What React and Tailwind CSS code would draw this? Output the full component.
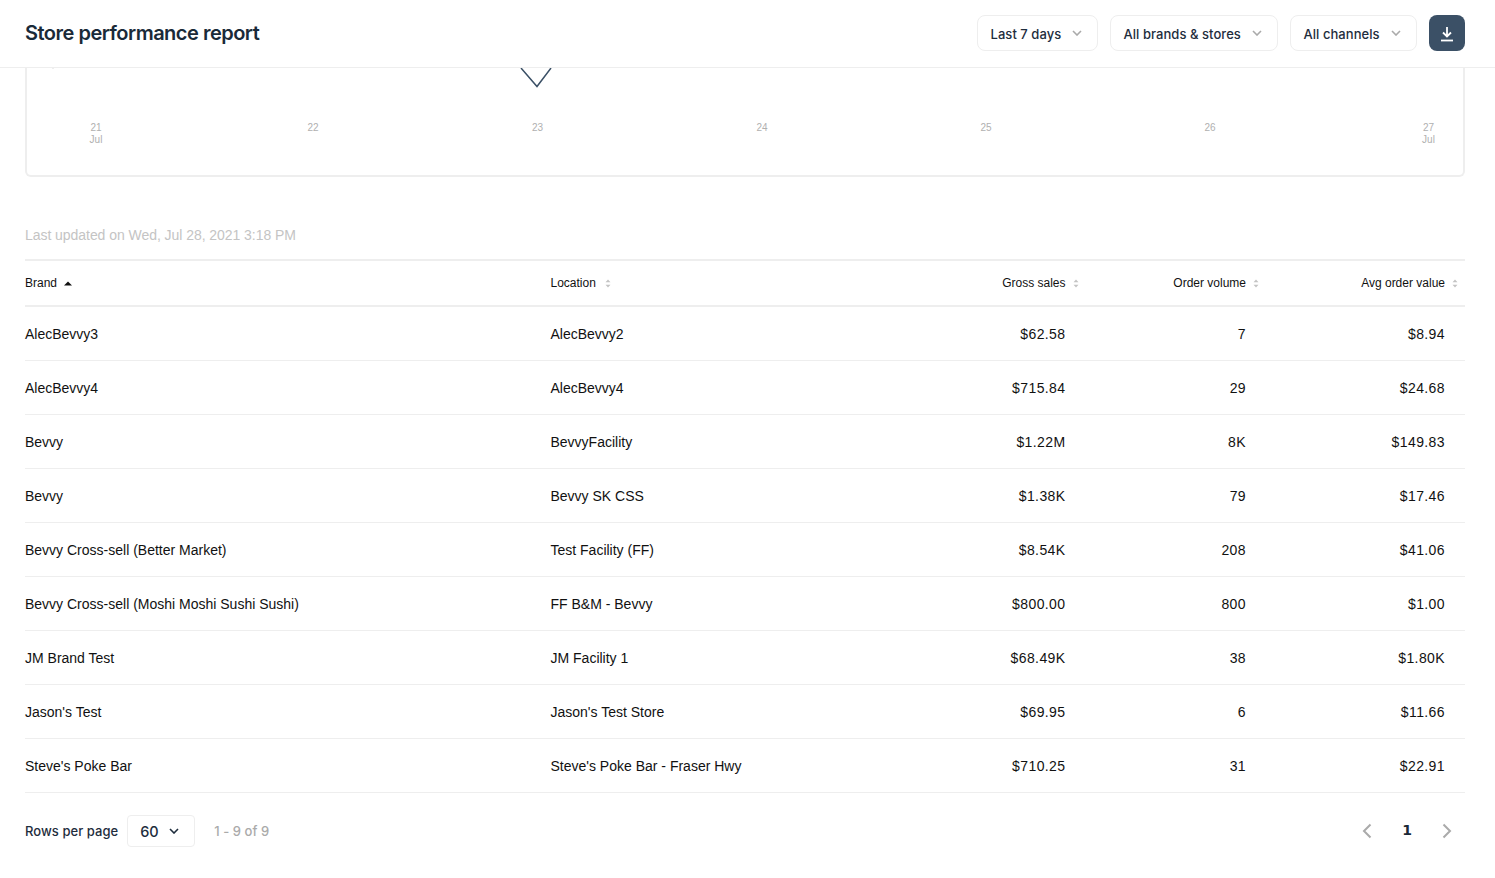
import React from "react";

const rows = [
  ["AlecBevvy3", "AlecBevvy2", "$62.58", "7", "$8.94"],
  ["AlecBevvy4", "AlecBevvy4", "$715.84", "29", "$24.68"],
  ["Bevvy", "BevvyFacility", "$1.22M", "8K", "$149.83"],
  ["Bevvy", "Bevvy SK CSS", "$1.38K", "79", "$17.46"],
  ["Bevvy Cross-sell (Better Market)", "Test Facility (FF)", "$8.54K", "208", "$41.06"],
  ["Bevvy Cross-sell (Moshi Moshi Sushi Sushi)", "FF B&M - Bevvy", "$800.00", "800", "$1.00"],
  ["JM Brand Test", "JM Facility 1", "$68.49K", "38", "$1.80K"],
  ["Jason's Test", "Jason's Test Store", "$69.95", "6", "$11.66"],
  ["Steve's Poke Bar", "Steve's Poke Bar - Fraser Hwy", "$710.25", "31", "$22.91"],
];

const Chevron = ({ className = "" }) => (
  <svg width="10" height="6" viewBox="0 0 10 6" fill="none" className={className}>
    <path d="M1 1l4 4 4-4" stroke="currentColor" strokeWidth="1.6" />
  </svg>
);

const Filter = ({ label, width }) => (
  <button className={`h-9 ${width} flex items-center justify-between pl-[12.5px] pr-[15px] bg-white border border-[#eeeeee] rounded-lg text-[13px] font-medium tracking-[0.05px] text-[#1e2d3d]`}>
    <span className="pt-[5px]">{label}</span>
    <Chevron className="text-[#aaaaaa]" />
  </button>
);

const SortIcon = () => (
  <svg width="6" height="9" viewBox="0 0 6 9" className="ml-[7px]">
    <path d="M3 0.5L5.5 3.2H0.5zM3 8.5L0.5 5.8h5z" fill="#c4c4c4" />
  </svg>
);

const labels = [
  [96, "21", "Jul"],
  [313, "22"],
  [537.5, "23"],
  [762, "24"],
  [986, "25"],
  [1210, "26"],
  [1428.5, "27", "Jul"],
];

export default function App() {
  return (
    <div className="h-[878px] overflow-hidden bg-white font-['Inter','Liberation_Sans',sans-serif] text-[#111111]">
      <header className="h-[68px] pb-[2px] flex items-center justify-between pl-[25px] pr-[30px] border-b border-[#eeeeee]">
        <h1 className="text-[20px] font-semibold tracking-[-0.5px] text-[#1a2a38]">Store performance report</h1>
        <div className="flex items-center gap-3">
          <Filter label="Last 7 days" width="w-[121px]" />
          <Filter label="All brands & stores" width="w-[168px]" />
          <Filter label="All channels" width="w-[127px]" />
          <button className="w-9 h-9 pt-[2px] rounded-lg bg-[#3b5066] flex items-center justify-center">
            <svg width="14" height="16" viewBox="0 0 14 16" fill="none" stroke="white" strokeWidth="1.8">
              <path d="M7 1v9M3 6.5L7 10.5 11 6.5" />
              <path d="M1 14.5h12" />
            </svg>
          </button>
        </div>
      </header>

      <main className="pl-[25px] pr-[30px] font-['Liberation_Sans',sans-serif]">
        <section className="h-[109px] border-2 border-t-0 border-[#eeeeee] rounded-b-md overflow-hidden">
          <svg width="1436" height="107" viewBox="27 68 1436 107" className="block">
            <path d="M521 68L537 86.5 551 68" fill="none" stroke="#3b5066" strokeWidth="1.5" />
            <path d="M53 68v1" stroke="#dddddd" />
            {labels.map(([x, a, b]) => (
              <text key={a} x={x} textAnchor="middle" fontSize="10" fill="#b0b0b0" fontFamily="'Liberation Sans', sans-serif">
                <tspan x={x} y="131">{a}</tspan>
                {b && <tspan x={x} y="143">{b}</tspan>}
              </text>
            ))}
          </svg>
        </section>

        <p className="mt-[49px] h-[18px] text-[14px] leading-[18px] tracking-[-0.05px] text-[#c4c4c4]">Last updated on Wed, Jul 28, 2021 3:18 PM</p>

        <table className="mt-[15px] w-[1440px] table-fixed border-collapse border-t-2 border-[#eeeeee]">
          <colgroup>
            <col className="w-[525.5px]" />
            <col className="w-[340px]" />
            <col className="w-[195px]" />
            <col className="w-[180.5px]" />
            <col />
          </colgroup>
          <thead>
            <tr className="h-[46px] border-b-2 border-[#eeeeee] text-[12px] text-left">
              <th className="p-0 font-normal">
                <div className="flex items-center">
                  <span>Brand</span>
                  <svg width="8" height="5" viewBox="0 0 8 5" className="ml-[7px]">
                    <path d="M4 0.5L8 4.5H0z" fill="#111111" />
                  </svg>
                </div>
              </th>
              <th className="p-0 font-normal">
                <div className="flex items-center">
                  <span>Location</span>
                  <svg width="6" height="9" viewBox="0 0 6 9" className="ml-[9px]">
                    <path d="M3 0.5L5.5 3.2H0.5zM3 8.5L0.5 5.8h5z" fill="#c4c4c4" />
                  </svg>
                </div>
              </th>
              <th className="p-0 pr-[7px] font-normal">
                <div className="flex items-center justify-end"><span>Gross sales</span><SortIcon /></div>
              </th>
              <th className="p-0 pr-[7px] font-normal">
                <div className="flex items-center justify-end"><span>Order volume</span><SortIcon /></div>
              </th>
              <th className="p-0 pr-[7px] font-normal">
                <div className="flex items-center justify-end"><span>Avg order value</span><SortIcon /></div>
              </th>
            </tr>
          </thead>
          <tbody className="text-[14px]">
            {rows.map((r, i) => (
              <tr key={i} className="h-[54px] border-b border-[#eeeeee]">
                <td className="p-0 pt-[2px]">{r[0]}</td>
                <td className="p-0 pt-[2px]">{r[1]}</td>
                <td className="p-0 pt-[2px] pr-[20px] text-right tracking-[0.4px]">{r[2]}</td>
                <td className="p-0 pt-[2px] pr-[20px] text-right tracking-[0.4px]">{r[3]}</td>
                <td className="p-0 pt-[2px] pr-[20px] text-right tracking-[0.4px]">{r[4]}</td>
              </tr>
            ))}
          </tbody>
        </table>

        <footer className="mt-[22px] flex items-center justify-between font-['Inter','Liberation_Sans',sans-serif]">
          <div className="flex items-center text-[13px] font-medium tracking-[0.05px] text-[#1e2d3d]">
            <span className="pt-[2px]">Rows per page</span>
            <button className="ml-[9px] w-[68px] h-8 flex items-center justify-between pl-3 pr-[15px] border border-[#eeeeee] rounded text-[14.5px]">
              <span className="pt-[2px]">60</span>
              <Chevron className="text-[#1e2d3d]" />
            </button>
            <span className="ml-[19px] pt-[2px] text-[#aaaaaa]">1 - 9 of 9</span>
          </div>
          <div className="flex items-center pr-[13px] text-[#aaaaaa]">
            <svg width="10" height="16" viewBox="0 0 10 16" fill="none" stroke="currentColor" strokeWidth="2">
              <path d="M8.5 1.5L2 8l6.5 6.5" />
            </svg>
            <span className="mx-[30px] text-[14px] font-bold text-[#1a2a38] font-['DejaVu_Sans',sans-serif]">1</span>
            <svg width="10" height="16" viewBox="0 0 10 16" fill="none" stroke="currentColor" strokeWidth="2">
              <path d="M1.5 1.5L8 8l-6.5 6.5" />
            </svg>
          </div>
        </footer>
      </main>
    </div>
  );
}
